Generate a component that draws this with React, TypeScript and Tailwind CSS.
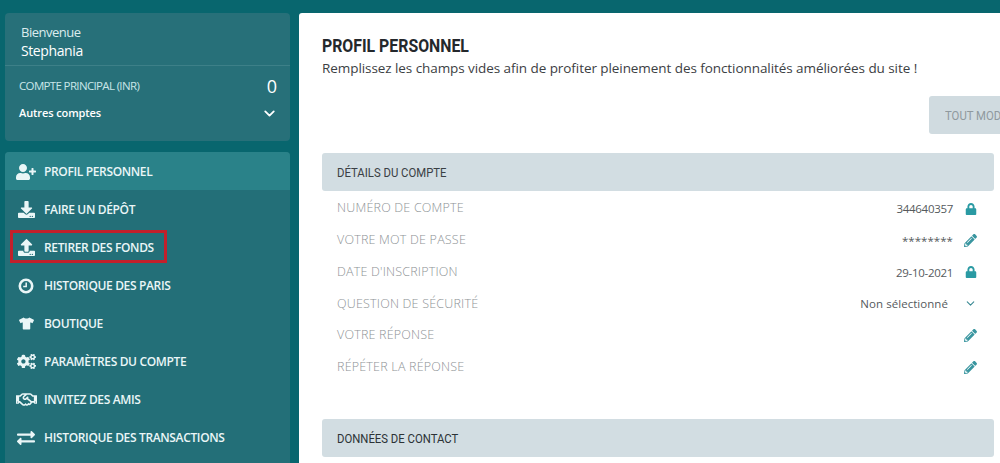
import { FaUserPlus, FaDownload, FaUpload, FaTshirt, FaCogs, FaRegHandshake, FaExchangeAlt, FaLock, FaPencilAlt } from 'react-icons/fa'
import { LuChevronDown } from 'react-icons/lu'

const clock = (
    <svg width="16" height="16" viewBox="0 0 16 16" fill="none" stroke="currentColor">
        <circle cx="8" cy="8" r="6.2" strokeWidth="2.6" />
        <path d="M8.2 4.4V8.6H5.2" strokeWidth="1.5" />
    </svg>
)

const menu = [
    { label: 'PROFIL PERSONNEL', icon: <FaUserPlus size={20} />, active: true },
    { label: 'FAIRE UN DÉPÔT', icon: <FaDownload size={17} /> },
    { label: 'RETIRER DES FONDS', icon: <FaUpload size={17} />, outlined: true },
    { label: 'HISTORIQUE DES PARIS', icon: clock },
    { label: 'BOUTIQUE', icon: <FaTshirt size={15} /> },
    { label: 'PARAMÈTRES DU COMPTE', icon: <FaCogs size={19} /> },
    { label: 'INVITEZ DES AMIS', icon: <FaRegHandshake size={21} /> },
    { label: 'HISTORIQUE DES TRANSACTIONS', icon: <FaExchangeAlt size={18} /> },
]

const lock = <FaLock size={12} className="text-[#2a9aa3]" />
const pencil = <FaPencilAlt size={13} className="text-[#3a96a0]" />

const rows = [
    { label: 'NUMÉRO DE COMPTE', value: '344640357', icon: lock, digits: true },
    { label: 'VOTRE MOT DE PASSE', value: '********', icon: pencil },
    { label: "DATE D'INSCRIPTION", value: '29-10-2021', icon: lock, digits: true },
    { label: 'QUESTION DE SÉCURITÉ', value: 'Non sélectionné', icon: <LuChevronDown size={13} className="text-[#3a8a94]" />, wide: true },
    { label: 'VOTRE RÉPONSE', value: '', icon: pencil },
    { label: 'RÉPÉTER LA RÉPONSE', value: '', icon: pencil },
]

export default function App() {
    return (
        <div className="h-[463px] w-[1000px] overflow-hidden bg-[#08666e] flex gap-[9px] pl-[5px] pt-[13px] font-['Open_Sans',sans-serif]">
            {/* Sidebar */}
            <aside className="w-[285px] shrink-0 flex flex-col gap-[11px]">
                <div className="h-[128px] shrink-0 bg-[#277079] rounded-[4px] text-white">
                    <div className="h-[53px] pl-[16px] pt-[11px] border-b border-[#3d8088]">
                        <p className="text-[13px] leading-[17px] text-[#dcecee] tracking-[-0.5px]">Bienvenue</p>
                        <p className="text-[14px] leading-[19px] font-medium tracking-[-0.4px]">Stephania</p>
                    </div>
                    <div className="flex items-center justify-between pl-[14px] pr-[13px] h-[38px] pt-[2px]">
                        <span className="text-[11.5px] text-[#c9e6e8] tracking-[-0.65px]">COMPTE PRINCIPAL (INR)</span>
                        <span className="text-[18px] font-medium">0</span>
                    </div>
                    <div className="flex items-center justify-between pl-[14px] pr-[12px] h-[18px]">
                        <span className="text-[11px] font-semibold tracking-[-0.1px]">Autres comptes</span>
                        <LuChevronDown size={17} strokeWidth={2.6} />
                    </div>
                </div>
                <nav className="flex-1 bg-[#236f78] rounded-t-[4px] text-[#eaf6f7]">
                    {menu.map((item) => (
                        <div
                            key={item.label}
                            className={item.active ? 'relative h-[38px] flex items-center pl-[6px] pt-[1px] bg-[#2a8289] rounded-t-[4px]' : 'relative h-[38px] flex items-center pl-[6px] pt-[1px]'}
                        >
                            <span className="w-[30px] flex justify-center shrink-0">{item.icon}</span>
                            <span className="ml-[3px] text-[12px] font-semibold tracking-[-0.35px]">{item.label}</span>
                            {item.outlined && (
                                <span className="absolute left-[5px] top-[2px] w-[157px] h-[33px] border-[3px] border-[#c2202b]" />
                            )}
                        </div>
                    ))}
                </nav>
            </aside>

            {/* Main panel */}
            <main className="relative flex-1 bg-white rounded-tl-[3px] pl-[23px] pr-[6px] pt-[23px] overflow-hidden">
                <h1 className="font-['Roboto',sans-serif] font-bold text-[18px] leading-[19px] text-[#24282c] origin-left scale-x-[0.88] whitespace-nowrap">PROFIL PERSONNEL</h1>
                <p className="mt-[4px] text-[13.5px] leading-[18px] text-[#3c4043] tracking-[-0.07px]">
                    Remplissez les champs vides afin de profiter pleinement des fonctionnalités améliorées du site !
                </p>
                <div className="flex justify-end mr-[-40px] mt-[19px]">
                    <div className="w-[105px] h-[38px] bg-[#d0dbe0] rounded-[3px] pl-[16px] flex items-center font-['Roboto',sans-serif] text-[13.5px] text-[#8f999e] whitespace-nowrap">
                        <span className="origin-left scale-x-[0.84]">TOUT MODIFIER</span>
                    </div>
                </div>
                <div className="mt-[19px] h-[38px] bg-[#d2dde2] rounded-[3px] pl-[15px] flex items-center font-['Roboto',sans-serif] text-[13.5px] text-[#3a4044]">
                    <span className="origin-left scale-x-[0.84]">DÉTAILS DU COMPTE</span>
                </div>
                <div className="mt-[2px]">
                    {rows.map((row) => (
                        <div key={row.label} className="h-[31.7px] flex items-center pl-[15px] pr-[17px] justify-between">
                            <span className="text-[12.5px] font-light text-[#8e9396] tracking-[0.2px]">{row.label}</span>
                            <span className="flex items-center">
                                <span className={row.digits ? 'text-[11.5px] text-[#555a5d] tracking-[-0.3px]' : 'text-[11.5px] text-[#555a5d] tracking-[0.05px]'}>{row.value}</span>
                                <span className={row.wide ? 'w-[29px] flex justify-end' : 'w-[24px] flex justify-end'}>{row.icon}</span>
                            </span>
                        </div>
                    ))}
                </div>
                <div className="mt-[36px] h-[38px] bg-[#d2dde2] rounded-[3px] pl-[15px] flex items-center font-['Roboto',sans-serif] text-[13.5px] text-[#2c3236]">
                    <span className="origin-left scale-x-[0.84]">DONNÉES DE CONTACT</span>
                </div>
            </main>
        </div>
    )
}
